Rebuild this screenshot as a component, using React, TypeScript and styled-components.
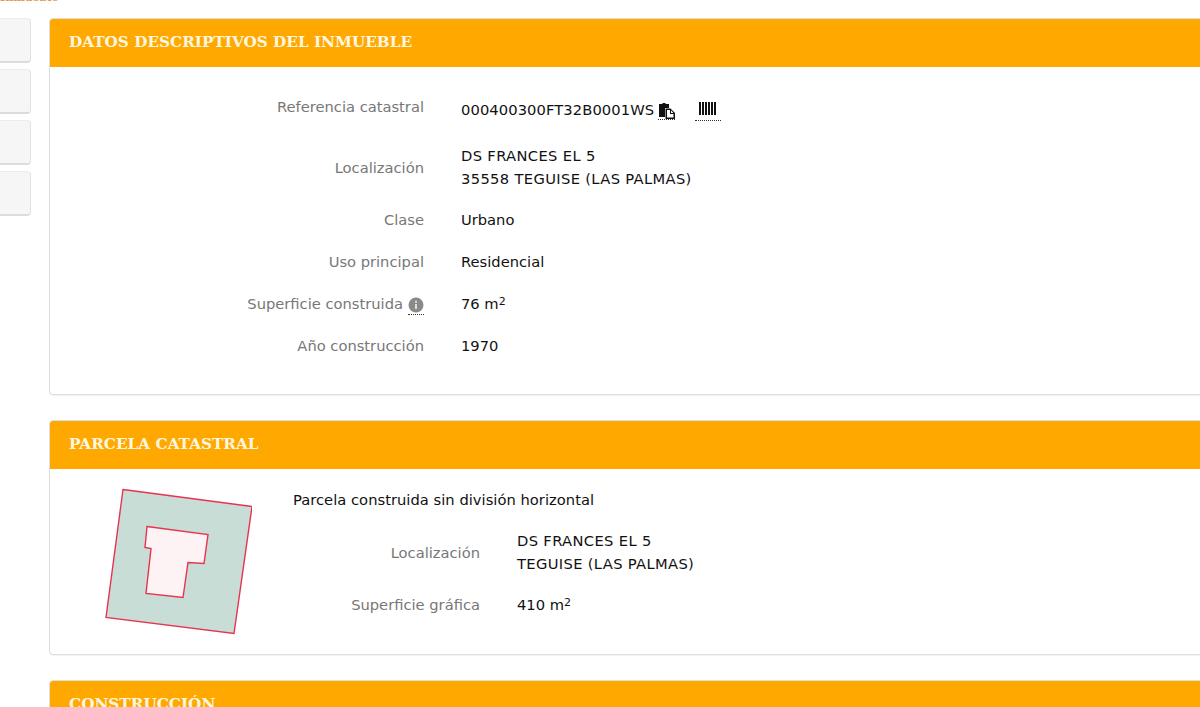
import React from "react";
import styled, { createGlobalStyle } from "styled-components";

const Global = createGlobalStyle`
  html, body { margin: 0; padding: 0; height: 707px; overflow: hidden; background: #fff; }
  body { font-family: "DejaVu Sans", Verdana, sans-serif; font-size: 14.7px; color: #111; }
`;
const Page = styled.div`width: 1200px; height: 707px; overflow: hidden;`;
const TopTitle = styled.div`
  height: 4px; overflow: hidden; color: #e8954a;
  font: bold 11px/14px "DejaVu Serif", serif;
`;
const TitleText = styled.span`display: block; margin-top: -9px; white-space: nowrap;`;
const Columns = styled.div`display: flex; padding-top: 14px;`;
const Side = styled.div`width: 31px; margin-right: 18px; display: flex; flex-direction: column; gap: 6px; flex: none;`;
const SideBtn = styled.div`
  height: 45px; background: #f6f6f6; border: 1px solid #ececec; border-left: 0;
  border-bottom: 2px solid #dcdcdc; border-right-color: #e2e2e2; border-radius: 0 4px 4px 0; box-sizing: border-box;
`;
const Main = styled.div`width: 1170px; display: flex; flex-direction: column; gap: 25px; flex: none;`;
const Panel = styled.section<{ $h: number }>`
  height: ${p => p.$h}px; box-sizing: border-box; border: 1px solid #dedede; border-radius: 4px 0 0 4px;
  box-shadow: 0 1px 1px rgba(0,0,0,.05); overflow: hidden; background: #fff;
`;
const Head = styled.h2`
  margin: -1px 0 0 -1px; height: 49px; background: #ffa900; color: #fff6e0; box-sizing: border-box;
  padding-left: 20px; font: bold 15.25px/49px "DejaVu Serif", serif;
`;
const Rows = styled.div`display: flex; flex-direction: column; padding-top: 15px;`;
const Row = styled.div<{ $h: number; $w?: number }>`
  display: grid; grid-template-columns: ${p => p.$w ?? 374}px 1fr; column-gap: 37px;
  align-items: center; height: ${p => p.$h}px;
`;
const Label = styled.div<{ $pb?: number; $pt?: number }>`
  text-align: right; color: #777; white-space: nowrap;
  padding-bottom: ${p => p.$pb ?? 0}px; padding-top: ${p => p.$pt ?? 0}px;
`;
const Value = styled.div<{ $pt?: number; $track?: number }>`
  color: #111; line-height: 23px; white-space: nowrap; padding-top: ${p => p.$pt ?? 0}px;
  letter-spacing: ${p => p.$track ?? 0}px;
`;
const Sup = styled.sup`font-size: 11px; line-height: 0; vertical-align: 4px;`;
const IconLink = styled.span<{ $w: number; $ml: number; $h: number; $va: number }>`
  display: inline-flex; justify-content: center; width: ${p => p.$w}px; margin-left: ${p => p.$ml}px;
  border-bottom: 1px dotted #333; height: ${p => p.$h}px; align-items: flex-start; box-sizing: border-box;
  vertical-align: ${p => p.$va}px; letter-spacing: 0;
`;
const InfoTip = styled.span`
  display: inline-flex; margin-left: 5px; border-bottom: 1px dotted #333; height: 17px; vertical-align: -4px; align-items: flex-start;
`;
const ParcelBody = styled.div`display: flex; height: 186px;`;
const Plot = styled.svg`width: 150px; height: 150px; flex: none; margin: 17px 0 0 52px; display: block;`;
const ParcelInfo = styled.div`flex: 1; margin-left: 41px;`;
const ParcelTitle = styled.div`margin-top: 21px; margin-bottom: 12px; line-height: 20px; color: #111; letter-spacing: .03px;`;
const CopyIcon = () => (
  <svg width="16" height="16" viewBox="0 0 16 16">
    <path d="M0 1h3.5V0h3v1H10v4H6v9H0z" fill="#111" />
    <path d="M6.5 5.5h5l4.5 4.5v6H6.5z" fill="#111" />
    <path d="M8 7h3v4h3.5v3.5H8z" fill="#fff" />
    <path d="M12 7.2l2.4 2.8H12z" fill="#fff" />
  </svg>
);
const BarIcon = () => (
  <svg width="18" height="13" viewBox="0 0 18 13" fill="#111"><path d="M0 0h2v13H0zM3 0h2v13H3zM6 0h2v13H6zM9 0h2v13H9zM12 0h2v13h-2zM15 0h2v13h-2z"/></svg>
);
const InfoIcon = () => (
  <svg width="16" height="16" viewBox="0 0 16 16"><circle cx="8" cy="8" r="7.5" fill="#8a8a8a"/><rect x="7" y="7" width="2" height="5" fill="#ddd"/><rect x="7" y="3.8" width="2" height="2" fill="#ddd"/></svg>
);

export default function App() {
  return (
    <Page>
      <Global />
      <TopTitle><TitleText>Inmueble</TitleText></TopTitle>
      <Columns>
        <Side>
          <SideBtn /><SideBtn /><SideBtn /><SideBtn />
        </Side>
        <Main>
          <Panel $h={377}>
            <Head>DATOS DESCRIPTIVOS DEL INMUEBLE</Head>
            <Rows>
              <Row $h={53}><Label $pb={4}>Referencia catastral</Label>
                <Value $pt={1} $track={0.1}>000400300FT32B0001WS<IconLink $w={17} $ml={4} $h={17} $va={-4}><CopyIcon /></IconLink><IconLink $w={26} $ml={20} $h={19} $va={0}><BarIcon /></IconLink></Value></Row>
              <Row $h={63}><Label $pt={1}>Localización</Label><Value $track={0.35}>DS FRANCES EL 5<br />35558 TEGUISE (LAS PALMAS)</Value></Row>
              <Row $h={42}><Label>Clase</Label><Value>Urbano</Value></Row>
              <Row $h={42}><Label>Uso principal</Label><Value>Residencial</Value></Row>
              <Row $h={42}><Label $pt={4}>Superficie construida<InfoTip><InfoIcon /></InfoTip></Label><Value>76 m<Sup>2</Sup></Value></Row>
              <Row $h={42}><Label $pt={1}>Año construcción</Label><Value>1970</Value></Row>
            </Rows>
          </Panel>
          <Panel $h={235}>
            <Head>PARCELA CATASTRAL</Head>
            <ParcelBody>
              <Plot viewBox="0 0 150 150">
                <path d="M21 3.5 L150 20.5 L132 147.5 L4 131.5z" fill="#c8ddd5" stroke="#e8334f" strokeWidth="1.4" />
                <path d="M45 40.5 L106 48.5 L102 77.5 L86 76.5 L81 111.5 L44 107.5 L49 62.5 L43 61.5z" fill="#fdf3f4" stroke="#e8334f" strokeWidth="1.4" />
              </Plot>
              <ParcelInfo>
                <ParcelTitle>Parcela construida sin división horizontal</ParcelTitle>
                <Row $h={60} $w={187}><Label>Localización</Label><Value $track={0.35}>DS FRANCES EL 5<br />TEGUISE (LAS PALMAS)</Value></Row>
                <Row $h={44} $w={187}><Label>Superficie gráfica</Label><Value>410 m<Sup>2</Sup></Value></Row>
              </ParcelInfo>
            </ParcelBody>
          </Panel>
          <Panel $h={60}>
            <Head>CONSTRUCCIÓN</Head>
          </Panel>
        </Main>
      </Columns>
    </Page>
  );
}
